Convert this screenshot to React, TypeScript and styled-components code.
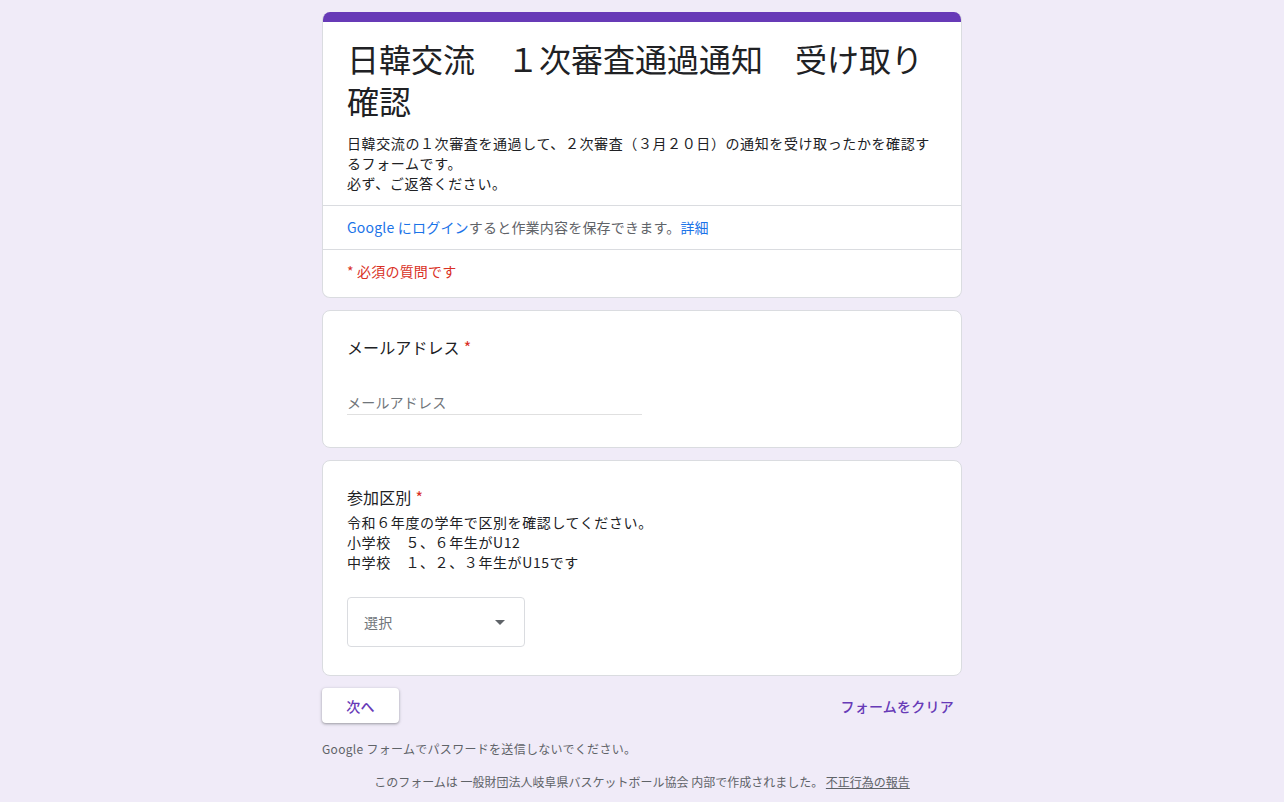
import React from "react";
import styled, { createGlobalStyle } from "styled-components";

const GlobalStyle = createGlobalStyle`
  html, body {
    margin: 0;
    padding: 0;
    background: #f0ebf8;
  }
  body {
    font-family: "Noto Sans CJK JP", "Noto Sans", sans-serif;
    color: #202124;
  }
`;

const Page = styled.div`
  width: 640px;
  margin: 0 auto;
  padding-top: 12px;
  padding-bottom: 16px;
`;

const Card = styled.div`
  background: #fff;
  border: 1px solid #dadce0;
  border-radius: 8px;
  margin-bottom: 12px;
  overflow: hidden;
`;

const HeaderCard = styled(Card)`
  border-top: none;
`;

const AccentBar = styled.div`
  height: 10px;
  background: #673ab7;
`;

const HeaderTop = styled.div`
  padding: 15px 24px 12px;
`;

const Title = styled.h1`
  margin: 0;
  font-size: 32px;
  font-weight: 400;
  line-height: 42px;
`;

const Description = styled.div`
  margin-top: 12px;
  font-size: 14px;
  line-height: 20px;
  letter-spacing: 0.6px;
  white-space: pre-wrap;
`;

const InfoRow = styled.div<{ $last?: boolean }>`
  border-top: 1px solid #dadce0;
  padding: 11px 24px ${(p) => (p.$last ? "16px" : "12px")};
  font-size: 14px;
  line-height: 20px;
  letter-spacing: 0.2px;
  color: #5f6368;
`;

const BlueLink = styled.span`
  color: #1a73e8;
`;

const Required = styled.span`
  color: #d93025;
`;

const Question = styled.div<{ $bottom?: number }>`
  padding: 24px 24px ${(p) => p.$bottom ?? 28}px;
`;

const QuestionTitle = styled.div`
  font-size: 16px;
  line-height: 24px;
  letter-spacing: 0.1px;
  color: #202124;
`;

const Star = styled.span`
  color: #d93025;
  margin-left: 4px;
`;

const QuestionHelp = styled.div`
  margin-top: 3px;
  font-size: 14px;
  line-height: 20px;
  letter-spacing: 0.6px;
  white-space: pre-wrap;
`;

const TextInput = styled.input`
  display: block;
  margin-top: 31px;
  width: 50%;
  box-sizing: border-box;
  height: 25px;
  padding: 0;
  border: none;
  border-bottom: 1px solid #e0e0e0;
  outline: none;
  font-family: inherit;
  font-size: 14px;
  line-height: 24px;
  letter-spacing: 0.2px;
  color: #202124;
  &::placeholder {
    color: #70757a;
  }
`;

const SelectBox = styled.div`
  margin-top: 25px;
  width: 178px;
  height: 50px;
  box-sizing: border-box;
  border: 1px solid #dadce0;
  border-radius: 4px;
  display: flex;
  align-items: center;
  justify-content: space-between;
  padding: 0 19px 0 16px;
  font-size: 14px;
  letter-spacing: 0.2px;
  color: #70757a;
`;

const Caret = styled.span`
  width: 0;
  height: 0;
  border-left: 5px solid transparent;
  border-right: 5px solid transparent;
  border-top: 5px solid #5f6368;
`;

const ActionRow = styled.div`
  display: flex;
  align-items: center;
  justify-content: space-between;
  margin-top: 12px;
`;

const NextButton = styled.button`
  width: 77px;
  height: 35px;
  border: none;
  border-radius: 4px;
  background: #fff;
  box-shadow: 0 1px 2px rgba(60, 64, 67, 0.3), 0 1px 3px 1px rgba(60, 64, 67, 0.15);
  font-family: inherit;
  font-size: 14px;
  font-weight: 500;
  letter-spacing: 0.25px;
  color: #673ab7;
  cursor: pointer;
`;

const ClearButton = styled.button`
  border: none;
  background: none;
  padding: 0 8px;
  height: 35px;
  font-family: inherit;
  font-size: 14px;
  font-weight: 500;
  letter-spacing: 0.25px;
  color: #673ab7;
  cursor: pointer;
`;

const Warning = styled.div`
  margin-top: 18px;
  font-size: 12px;
  line-height: 16px;
  letter-spacing: 0.3px;
  color: #5f6368;
`;

const Footer = styled.div`
  margin-top: 17px;
  text-align: center;
  font-size: 12px;
  line-height: 16px;
  color: #5f6368;
`;

const Underlined = styled.span`
  text-decoration: underline;
  color: #5f6368;
`;

export default function App() {
  return (
    <>
      <GlobalStyle />
      <Page>
        <HeaderCard>
          <AccentBar />
          <HeaderTop>
            <Title>日韓交流　１次審査通過通知　受け取り確認</Title>
            <Description>
              {"日韓交流の１次審査を通過して、２次審査（３月２０日）の通知を受け取ったかを確認するフォームです。\n必ず、ご返答ください。"}
            </Description>
          </HeaderTop>
          <InfoRow>
            <BlueLink>Google にログイン</BlueLink>すると作業内容を保存できます。
            <BlueLink>詳細</BlueLink>
          </InfoRow>
          <InfoRow $last>
            <Required>* 必須の質問です</Required>
          </InfoRow>
        </HeaderCard>

        <Card>
          <Question $bottom={32}>
            <QuestionTitle>
              メールアドレス<Star>*</Star>
            </QuestionTitle>
            <TextInput placeholder="メールアドレス" />
          </Question>
        </Card>

        <Card>
          <Question>
            <QuestionTitle>
              参加区別<Star>*</Star>
            </QuestionTitle>
            <QuestionHelp>
              {"令和６年度の学年で区別を確認してください。\n小学校　５、６年生がU12\n中学校　１、２、３年生がU15です"}
            </QuestionHelp>
            <SelectBox>
              選択
              <Caret />
            </SelectBox>
          </Question>
        </Card>

        <ActionRow>
          <NextButton>次へ</NextButton>
          <ClearButton>フォームをクリア</ClearButton>
        </ActionRow>

        <Warning>Google フォームでパスワードを送信しないでください。</Warning>
        <Footer>
          このフォームは 一般財団法人岐阜県バスケットボール協会 内部で作成されました。{" "}
          <Underlined>不正行為の報告</Underlined>
        </Footer>
      </Page>
    </>
  );
}
